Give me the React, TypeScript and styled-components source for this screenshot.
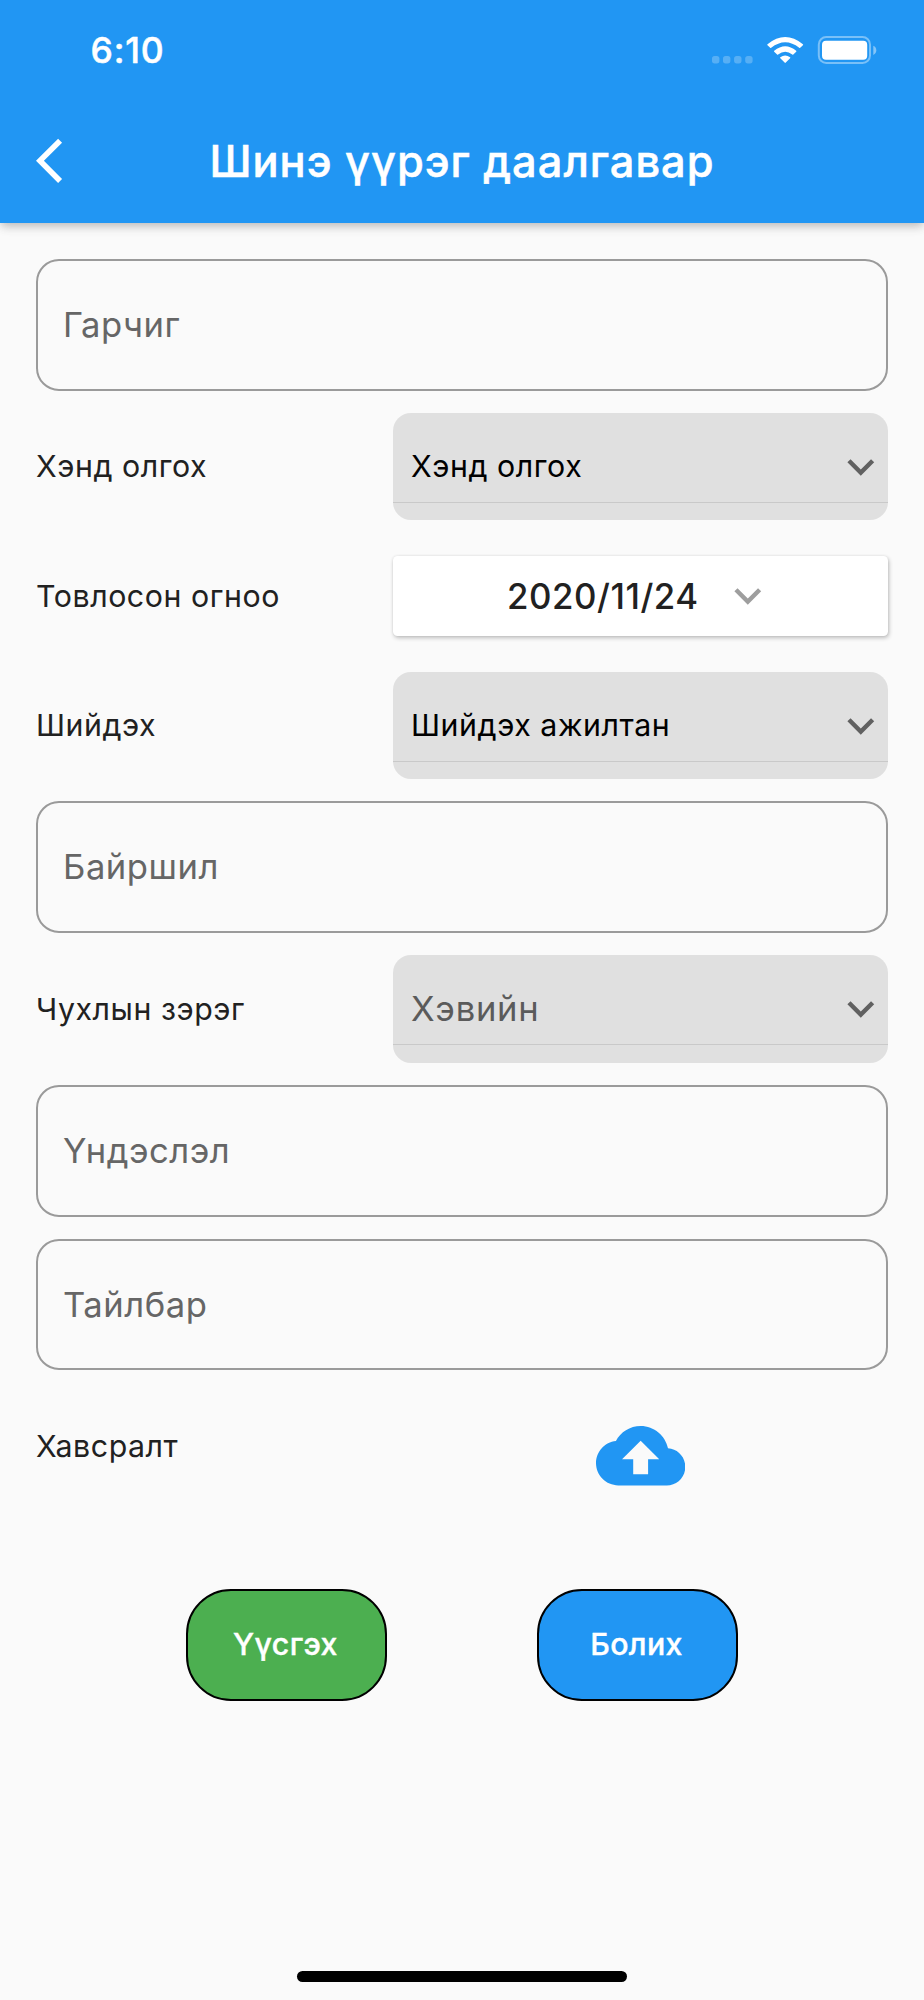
import React from 'react';
import styled, { createGlobalStyle } from 'styled-components';

const GlobalStyle = createGlobalStyle`
  * { box-sizing: border-box; }
  body {
    margin: 0;
    background: #fafafa;
    font-family: Inter, "Liberation Sans", sans-serif;
  }
`;

const Screen = styled.div`
  width: 924px;
  height: 2000px;
  display: flex;
  flex-direction: column;
  background: #fafafa;
  overflow: hidden;
`;

const Header = styled.header`
  height: 223px;
  flex: none;
  display: flex;
  flex-direction: column;
  background: #2196f3;
  color: #fff;
  box-shadow: 0 4px 8px -2px rgba(0, 0, 0, 0.16), 0 5px 10px rgba(0, 0, 0, 0.08), 0 2px 14px rgba(0, 0, 0, 0.06);
`;

const StatusBar = styled.div`
  height: 98px;
  display: flex;
  justify-content: space-between;
  padding: 0 47px 0 90.5px;
`;

const Clock = styled.span`
  padding-top: 29px;
  font-size: 35.5px;
  line-height: 43px;
  font-weight: 500;
  letter-spacing: 0.8px;
  -webkit-text-stroke: 0.5px currentColor;
`;

const StatusIcons = styled.svg`
  width: 166px;
  height: 28px;
  margin-top: 36px;
`;

const TitleBar = styled.div`
  height: 125px;
  display: grid;
  grid-template-columns: 160px 1fr 160px;
  align-items: center;
`;

const BackButton = styled.button`
  display: flex;
  border: 0;
  background: none;
  padding: 0 0 0 36px;
  color: inherit;
`;

const Title = styled.h1`
  margin: 0;
  text-align: center;
  white-space: nowrap;
  font-size: 43.4px;
  line-height: 52px;
  font-weight: 500;
  letter-spacing: 1px;
  -webkit-text-stroke: 0.5px currentColor;
`;

const Form = styled.form`
  display: flex;
  flex-direction: column;
  gap: 22.32px;
  padding: 36.3px 36px 0;
`;

const TextField = styled.label`
  height: 131.67px;
  display: flex;
  align-items: center;
  border: 2px solid #9a9a9a;
  border-radius: 23px;
  padding: 0 25px 2px;
  color: #666;
  font-size: 34.6px;
  letter-spacing: 0.55px;
`;

const Row = styled.div`
  height: 107.1px;
  display: grid;
  grid-template-columns: 357px 1fr;
  align-items: center;
`;

const Label = styled.span`
  padding-bottom: 1px;
  color: #212121;
  font-size: 30.3px;
  letter-spacing: 0.56px;
`;

const Select = styled.div`
  height: 107.1px;
  display: flex;
  flex-direction: column;
  background: #e0e0e0;
  border-radius: 18px;
`;

const SelectValue = styled.div<{ $hint?: boolean }>`
  height: 90px;
  display: flex;
  align-items: center;
  justify-content: space-between;
  border-bottom: 1px solid #c9c9c9;
  padding: 18px 0 0 18px;
  color: ${p => (p.$hint ? '#5b5b5b' : '#000')};
  font-size: ${p => (p.$hint ? '34.6px' : '30.3px')};
  letter-spacing: ${p => (p.$hint ? '0.75px' : '0.57px')};

  span {
    padding-bottom: 2px;
  }
`;

const DateButton = styled.button`
  height: 80px;
  display: flex;
  align-items: center;
  border: 0;
  border-radius: 4.5px;
  background: #fff;
  padding: 0 0 0 114px;
  gap: 22px;
  color: #212121;
  font-family: inherit;
  font-size: 34.8px;
  font-weight: 500;
  letter-spacing: 0.55px;
  box-shadow: 1px 2px 4px rgba(0, 0, 0, 0.24), 0 0 3px rgba(0, 0, 0, 0.08);
`;

const Upload = styled.div`
  display: flex;
  justify-content: center;
  padding-top: 18.5px;
`;

const Actions = styled.div`
  display: flex;
  gap: 150px;
  padding: 67px 0 0 150px;
`;

const ActionButton = styled.button<{ $color: string }>`
  width: 201px;
  height: 112px;
  border: 2px solid #000;
  border-radius: 45px;
  background: ${p => p.$color};
  color: #fff;
  padding: 0 2px 2px 0;
  font-family: inherit;
  font-size: 30.3px;
  font-weight: 500;
  letter-spacing: 0.4px;
  -webkit-text-stroke: 0.4px currentColor;
`;

const HomeIndicator = styled.div`
  width: 330px;
  height: 11px;
  margin: auto auto 18px;
  border-radius: 6px;
  background: #000;
`;

const Chevron = ({ color }: { color: string }) => (
  <svg width="53.6" height="53.6" viewBox="0 0 24 24" fill={color}>
    <path d="M16.59 8.59L12 13.17 7.41 8.59 6 10l6 6 6-6z" />
  </svg>
);

const SelectRow = ({ label, value, hint }: { label: string; value: string; hint?: boolean }) => (
  <Row>
    <Label>{label}</Label>
    <Select>
      <SelectValue $hint={hint}>
        <span>{value}</span>
        <Chevron color="#616161" />
      </SelectValue>
    </Select>
  </Row>
);

export default function App() {
  return (
    <>
      <GlobalStyle />
      <Screen>
        <Header>
          <StatusBar>
            <Clock>6:10</Clock>
            <StatusIcons viewBox="0 0 166 28" fill="#fff">
              <g opacity="0.24">
                <rect x="1" y="20" width="7.4" height="7.4" rx="2.6" />
                <rect x="12" y="20" width="7.4" height="7.4" rx="2.6" />
                <rect x="23.1" y="20" width="7.4" height="7.4" rx="2.6" />
                <rect x="34.2" y="20" width="7.4" height="7.4" rx="2.6" />
              </g>
              <path d="M56.5 8.2Q74.2 -6.2 91.9 8.2Q92.4 8.7 91.9 9.2L89.2 11.8Q88.7 12.2 88.2 11.8Q74.2 0.8 60.2 11.8Q59.7 12.2 59.2 11.8L56.5 9.2Q56 8.7 56.5 8.2Z" />
              <path d="M63.2 14.8Q74.2 5.6 85.2 14.8Q85.7 15.3 85.2 15.8L82.3 18.5Q81.8 18.9 81.3 18.5Q74.2 12.8 67.1 18.5Q66.6 18.9 66.1 18.5L63.2 15.8Q62.7 15.3 63.2 14.8Z" />
              <path d="M69.3 21.3Q74.2 17.8 79.1 21.3Q79.6 21.8 79.1 22.3L74.8 26.6Q74.2 27.2 73.6 26.6L69.3 22.3Q68.8 21.8 69.3 21.3Z" />
              <rect x="107.8" y="1" width="51.2" height="26" rx="7.5" fill="none" stroke="#fff" strokeWidth="2" opacity="0.4" />
              <rect x="111" y="4.8" width="45.2" height="19" rx="4" />
              <path d="M162.3 9.8Q165.3 11.2 165.3 14.3Q165.3 17.5 162.3 18.9Z" opacity="0.45" />
            </StatusIcons>
          </StatusBar>
          <TitleBar>
            <BackButton type="button" aria-label="Буцах">
              <svg width="53.6" height="53.6" viewBox="0 0 24 24" fill="currentColor">
                <path d="M11.67 3.87L9.9 2.1 0 12l9.9 9.9 1.77-1.77L3.54 12z" />
              </svg>
            </BackButton>
            <Title>Шинэ үүрэг даалгавар</Title>
          </TitleBar>
        </Header>

        <Form>
          <TextField>Гарчиг</TextField>
          <SelectRow label="Хэнд олгох" value="Хэнд олгох" />
          <Row>
            <Label>Товлосон огноо</Label>
            <DateButton type="button">
              <span>2020/11/24</span>
              <Chevron color="#9e9e9e" />
            </DateButton>
          </Row>
          <SelectRow label="Шийдэх" value="Шийдэх ажилтан" />
          <TextField>Байршил</TextField>
          <SelectRow label="Чухлын зэрэг" value="Хэвийн" hint />
          <TextField>Үндэслэл</TextField>
          <TextField>Тайлбар</TextField>
          <Row>
            <Label>Хавсралт</Label>
            <Upload>
              <svg width="89.3" height="89.3" viewBox="0 0 24 24" fill="#2196f3">
                <path d="M19.35 10.04C18.67 6.59 15.64 4 12 4 9.11 4 6.6 5.64 5.35 8.04 2.34 8.36 0 10.91 0 14c0 3.31 2.69 6 6 6h13c2.76 0 5-2.24 5-5 0-2.64-2.05-4.78-4.65-4.96zM14 13v4h-4v-4H7l5-5 5 5h-3z" />
              </svg>
            </Upload>
          </Row>
          <Actions>
            <ActionButton type="button" $color="#4caf50">Үүсгэх</ActionButton>
            <ActionButton type="button" $color="#2196f3">Болих</ActionButton>
          </Actions>
        </Form>
        <HomeIndicator />
      </Screen>
    </>
  );
}
